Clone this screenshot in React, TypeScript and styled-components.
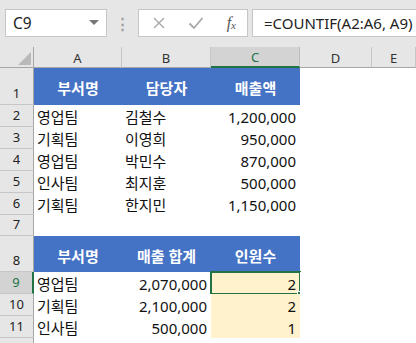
import React from "react";
import styled, { createGlobalStyle } from "styled-components";

const GlobalStyle = createGlobalStyle`
  * {
    box-sizing: border-box;
  }
  body {
    margin: 0;
    background: #ffffff;
    font-family: "Noto Sans", "Noto Sans CJK KR", sans-serif;
  }
`;

const GREEN = "#217346";
const KR = `"Noto Sans CJK KR", "Noto Sans", sans-serif`;

type Align = "left" | "right" | "center";

interface Row {
  num: number | "";
  height: number;
  cells: { text: string; align?: Align; header?: boolean; fill?: boolean }[];
}

const rows: Row[] = [
  {
    num: 1,
    height: 37,
    cells: [
      { text: "부서명", header: true },
      { text: "담당자", header: true },
      { text: "매출액", header: true },
    ],
  },
  { num: 2, height: 22, cells: [{ text: "영업팀" }, { text: "김철수" }, { text: "1,200,000", align: "right" }] },
  { num: 3, height: 22, cells: [{ text: "기획팀" }, { text: "이영희" }, { text: "950,000", align: "right" }] },
  { num: 4, height: 22, cells: [{ text: "영업팀" }, { text: "박민수" }, { text: "870,000", align: "right" }] },
  { num: 5, height: 22, cells: [{ text: "인사팀" }, { text: "최지훈" }, { text: "500,000", align: "right" }] },
  { num: 6, height: 22, cells: [{ text: "기획팀" }, { text: "한지민" }, { text: "1,150,000", align: "right" }] },
  { num: 7, height: 21, cells: [] },
  {
    num: 8,
    height: 36,
    cells: [
      { text: "부서명", header: true },
      { text: "매출 합계", header: true },
      { text: "인원수", header: true },
    ],
  },
  { num: 9, height: 22, cells: [{ text: "영업팀" }, { text: "2,070,000", align: "right" }, { text: "2", align: "right", fill: true }] },
  { num: 10, height: 22, cells: [{ text: "기획팀" }, { text: "2,100,000", align: "right" }, { text: "2", align: "right", fill: true }] },
  { num: 11, height: 22, cells: [{ text: "인사팀" }, { text: "500,000", align: "right" }, { text: "1", align: "right", fill: true }] },
  // row 12 is only a sliver at the bottom edge
  { num: "", height: 22, cells: [] },
];

const columns = ["A", "B", "C", "D", "E"];

export default function App() {
  return (
    <>
      <GlobalStyle />
      <Window>
        <FormulaBar>
          <NameBox>
            <NameText>C9</NameText>
            <Caret />
          </NameBox>
          <Grip>⋮</Grip>
          <ButtonBox>
            <svg width="14" height="14" viewBox="0 0 14 14">
              <path d="M2 2 L12 12 M12 2 L2 12" stroke="#a8a8a8" strokeWidth="1.4" fill="none" />
            </svg>
            <svg width="16" height="14" viewBox="0 0 16 14">
              <path d="M1.5 7.5 L6 12 L14.5 2" stroke="#a8a8a8" strokeWidth="1.8" fill="none" />
            </svg>
            <Fx>
              f<sub>x</sub>
            </Fx>
          </ButtonBox>
          <FormulaInput>=COUNTIF(A2:A6, A9)</FormulaInput>
        </FormulaBar>

        <Sheet>
          <Corner>
            <svg width="16" height="16" viewBox="0 0 16 16">
              <path d="M16 0 L16 16 L0 16 Z" fill="#b9b9b9" />
            </svg>
          </Corner>
          {columns.map((c) => (
            <ColHeader key={c} $selected={c === "C"}>
              {c}
            </ColHeader>
          ))}

          {rows.map((row, r) => (
            <React.Fragment key={r}>
              <RowHeader $selected={row.num === 9} style={{ height: row.height }}>
                {row.num}
              </RowHeader>
              {[0, 1, 2].map((i) => {
                const cell = row.cells[i];
                if (!cell) return <Cell key={i} />;
                if (cell.header) return <HeadCell key={i}>{cell.text}</HeadCell>;
                return (
                  <Cell key={i} $align={cell.align || "left"} $fill={cell.fill}>
                    {cell.text}
                    {row.num === 9 && i === 2 && (
                      <Selection>
                        <FillHandle />
                      </Selection>
                    )}
                  </Cell>
                );
              })}
              <Cell />
              <Cell />
            </React.Fragment>
          ))}
        </Sheet>
      </Window>
    </>
  );
}

const Window = styled.div`
  width: 416px;
  height: 343px;
  overflow: hidden;
  background: #ffffff;
`;

const FormulaBar = styled.div`
  height: 47px;
  background: #e6e6e6;
  display: flex;
  align-items: center;
  padding: 0 0 2px 5px;
`;

const NameBox = styled.div`
  width: 102px;
  height: 28px;
  background: #ffffff;
  border: 1px solid #c6c6c6;
  display: flex;
  align-items: center;
  justify-content: space-between;
  padding: 0 7px 0 7px;
`;

const NameText = styled.span`
  font-family: "Noto Sans", sans-serif;
  font-size: 15.5px;
  color: #222;
`;

const Caret = styled.span`
  width: 0;
  height: 0;
  border-left: 5px solid transparent;
  border-right: 5px solid transparent;
  border-top: 5px solid #777;
`;

const Grip = styled.span`
  width: 31px;
  text-align: center;
  color: #a0a0a0;
  font-size: 15px;
  font-weight: 700;
`;

const ButtonBox = styled.div`
  width: 110px;
  height: 28px;
  background: #ffffff;
  border: 1px solid #c6c6c6;
  display: flex;
  align-items: center;
  justify-content: space-between;
  padding: 0 11px 0 13px;
`;

const Fx = styled.span`
  font-family: "Liberation Serif", serif;
  font-style: italic;
  font-size: 16px;
  color: #555;
  line-height: 1;
  sub {
    font-size: 11px;
    vertical-align: -1px;
  }
`;

const FormulaInput = styled.div`
  flex: 1;
  height: 28px;
  margin-left: 4px;
  background: #ffffff;
  border: 1px solid #c6c6c6;
  border-right: none;
  display: flex;
  align-items: center;
  padding-left: 11px;
  font-family: "Noto Sans", sans-serif;
  font-size: 15px;
  color: #222;
  white-space: nowrap;
`;

const Sheet = styled.div`
  display: grid;
  grid-template-columns: 34px 88px 89px 89px 72px 1fr;
  grid-auto-rows: min-content;
`;

const Corner = styled.div`
  height: 21px;
  background: #e6e6e6;
  border-right: 1px solid #a6a6a6;
  border-bottom: 1px solid #a6a6a6;
  display: flex;
  align-items: flex-end;
  justify-content: flex-end;
  padding: 0 2px 2px 0;
  svg {
    width: 13px;
    height: 13px;
  }
`;

const ColHeader = styled.div<{ $selected: boolean }>`
  height: 21px;
  background: ${(p) => (p.$selected ? "#d3d3d3" : "#e6e6e6")};
  border-right: 1px solid ${(p) => (p.$selected ? "#bcbcbc" : "#c6c6c6")};
  border-bottom: ${(p) => (p.$selected ? `2px solid ${GREEN}` : "1px solid #a6a6a6")};
  display: flex;
  align-items: center;
  justify-content: center;
  font-family: "Noto Sans", sans-serif;
  font-size: 13px;
  color: ${(p) => (p.$selected ? GREEN : "#333")};
  padding-top: 1px;
`;

const RowHeader = styled.div<{ $selected: boolean }>`
  background: ${(p) => (p.$selected ? "#d3d3d3" : "#e6e6e6")};
  border-right: ${(p) => (p.$selected ? `2px solid ${GREEN}` : "1px solid #a6a6a6")};
  border-bottom: 1px solid #c6c6c6;
  display: flex;
  align-items: flex-end;
  justify-content: center;
  padding-bottom: 2px;
  font-family: "Noto Sans", sans-serif;
  font-size: 13px;
  color: ${(p) => (p.$selected ? GREEN : "#222")};
`;

const Cell = styled.div<{ $align?: Align; $fill?: boolean }>`
  position: relative;
  background: ${(p) => (p.$fill ? "#fff2cc" : "#ffffff")};
  display: flex;
  align-items: center;
  justify-content: ${(p) =>
    p.$align === "right" ? "flex-end" : p.$align === "center" ? "center" : "flex-start"};
  padding: 1px 4px 0 3px;
  font-family: "Noto Sans", ${KR};
  font-size: 15px;
  color: #111;
  white-space: nowrap;
`;

const HeadCell = styled.div`
  background: #4472c4;
  display: flex;
  align-items: center;
  justify-content: center;
  padding-top: 2px;
  font-family: "Noto Sans", ${KR};
  font-weight: 700;
  font-size: 15px;
  color: #ffffff;
  white-space: nowrap;
`;

const Selection = styled.div`
  position: absolute;
  left: -1px;
  top: -1px;
  right: -1px;
  bottom: -1px;
  border: 2px solid ${GREEN};
  pointer-events: none;
`;

const FillHandle = styled.div`
  position: absolute;
  right: -5px;
  bottom: -5px;
  width: 7px;
  height: 7px;
  background: ${GREEN};
  border: 1px solid #ffffff;
`;
